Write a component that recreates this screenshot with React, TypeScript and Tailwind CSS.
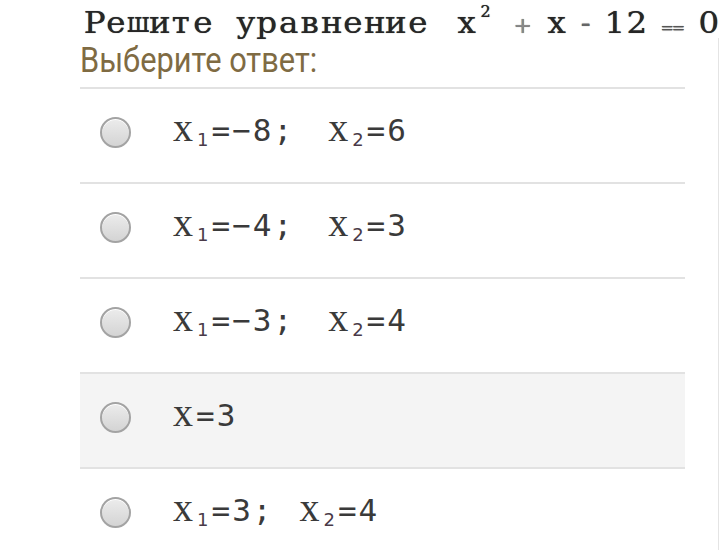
const options = [
  { kind: "pair", a: "−8", b: "6", gap: "ml-[36px]" },
  { kind: "pair", a: "−4", b: "3", gap: "ml-[36px]" },
  { kind: "pair", a: "−3", b: "4", gap: "ml-[36px]" },
  { kind: "single", a: "3", b: "", gap: "" },
  { kind: "pair", a: "3", b: "4", gap: "ml-[28px]" },
];

const question = "Решите уравнение";

function Radio() {
  return (
    <span className="block h-[31px] w-[31px] shrink-0 rounded-full border-2 border-[#a3a3a3] bg-gradient-to-b from-[#ececec] to-[#d4d4d4] shadow-[inset_0_1px_0_#fff]" />
  );
}

function Xsub({ n }: { n: string }) {
  return (
    <span className="flex items-baseline">
      <span className="font-['Liberation_Serif',serif] text-[40px] leading-none text-[#3a3a3a]">
        x
      </span>
      <span className="relative top-[5px] ml-[4px] font-['DejaVu_Sans',sans-serif] text-[18px] leading-none text-[#4a3a48]">
        {n}
      </span>
    </span>
  );
}

function Value({ v }: { v: string }) {
  return (
    <span className="ml-[3px] font-['DejaVu_Sans_Mono',monospace] text-[31px] leading-none tracking-[2px] text-[#3a3a3a]">
      ={v}
    </span>
  );
}

export default function App() {
  return (
    <div className="h-[550px] w-[720px] overflow-hidden bg-white">
      {/* Question, typewriter style */}
      <div className="flex h-[38px] items-baseline whitespace-nowrap pl-[84px] pt-[9px] font-['DejaVu_Serif',serif] text-[29px] leading-none text-[#262626] [text-shadow:0_0_0.7px_#333]">
        {question.split("").map((ch, i) => (
          <span
            key={i}
            className={`inline-block w-[22px] text-center ${
              ch === "ш" ? "origin-bottom scale-y-[1.14] text-[24px]" : "scale-x-[1.12]"
            }`}
          >
            {ch === " " ? "\u00a0" : ch}
          </span>
        ))}
        <span className="ml-[26px] inline-block w-[26px] scale-x-[1.12] text-center">x</span>
        <span className="relative -top-[16px] inline-block w-[12px] text-center text-[16px]">2</span>
        <span className="ml-[22px] inline-block w-[16px] text-center text-[22px] text-[#8a8a8a]">+</span>
        <span className="ml-[15px] inline-block w-[26px] scale-x-[1.12] text-center">x</span>
        <span className="ml-[8px] inline-block w-[16px] text-center text-[#666]">-</span>
        <span className="ml-[11px] inline-block w-[22px] scale-x-[1.12] text-center">1</span>
        <span className="inline-block w-[22px] scale-x-[1.12] text-center">2</span>
        <span className="ml-[13px] inline-block w-[22px] text-center text-[16px] tracking-[-2px] text-[#555]">==</span>
        <span className="ml-[16px] inline-block w-[22px] scale-x-[1.12] text-center">0</span>
      </div>

      <div className="h-[512px] w-[719px] border-r border-[#e4e4e4] pl-[80px]">
        <div className="w-[605px]">
          <div className="origin-left scale-x-[0.88] pt-[5px] pb-[8px] font-['Roboto',sans-serif] text-[35px] leading-[36px] text-[#7f6b43]">
            Выберите ответ:
          </div>

          {options.map((o, i) => (
            <div
              key={i}
              className={`flex h-[95px] items-center border-t-2 border-[#e2e2e2] pl-[20px] ${
                i === 3 ? "bg-[#f4f4f4]" : ""
              }`}
            >
              <div className="-mt-[7px]">
                <Radio />
              </div>
              <div className="relative -top-[8px] ml-[42px] flex items-baseline">
                {o.kind === "pair" ? (
                  <>
                    <Xsub n="1" />
                    <Value v={o.a} />
                    <span className="font-['DejaVu_Sans_Mono',monospace] text-[31px] leading-none text-[#3a3a3a]">
                      ;
                    </span>
                    <span className={o.gap}>
                      <Xsub n="2" />
                    </span>
                    <Value v={o.b} />
                  </>
                ) : (
                  <>
                    <span className="font-['Liberation_Serif',serif] text-[40px] leading-none text-[#3a3a3a]">
                      x
                    </span>
                    <Value v={o.a} />
                  </>
                )}
              </div>
            </div>
          ))}
        </div>
      </div>
    </div>
  );
}
